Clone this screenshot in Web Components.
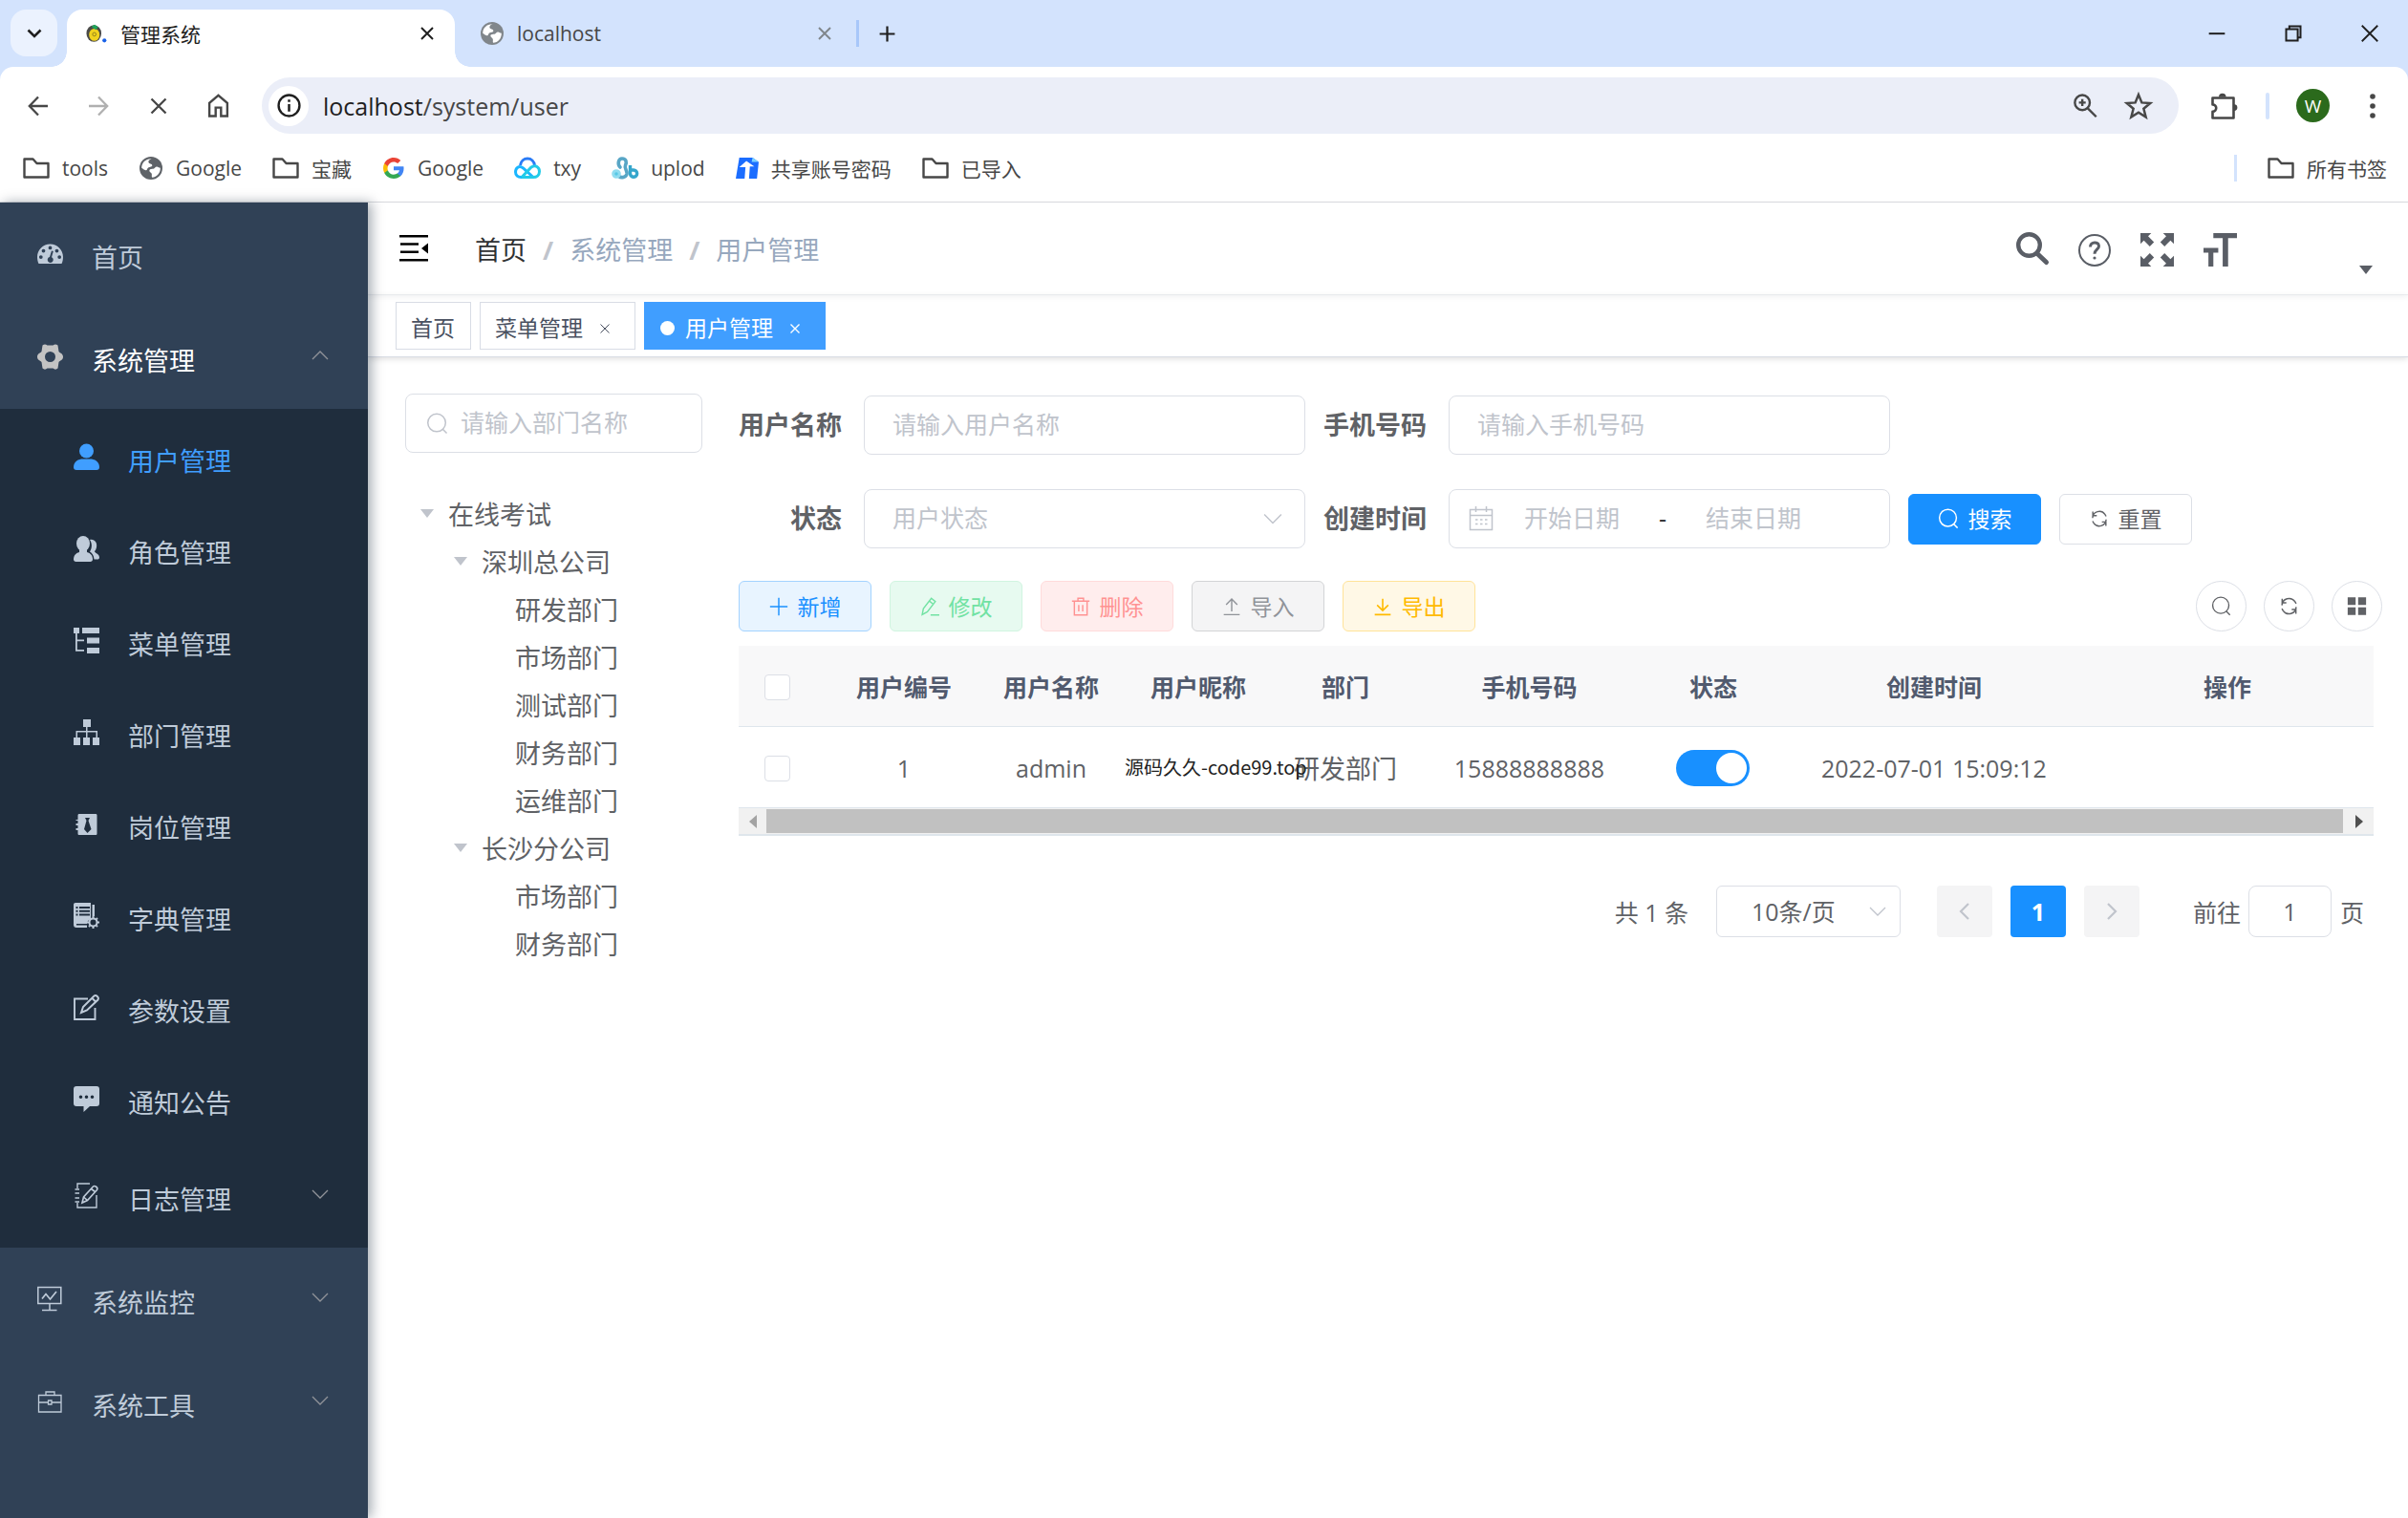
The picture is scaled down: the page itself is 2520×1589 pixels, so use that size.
<!DOCTYPE html>
<html lang="zh-CN">
<head>
<meta charset="utf-8">
<title>管理系统</title>
<style>
html,body{margin:0;height:100%}
body{font-family:"Open Sans","Noto Sans CJK SC",sans-serif;background:#fff;color:#606266;overflow:hidden}
</style>
</head>
<body>
<browser-window>
  <admin-app></admin-app>
</browser-window>
<script>
const S='fill="none" stroke="currentColor"';
const ICONS={
 down:['0 0 24 24',`<path ${S} stroke-width="2.6" d="M5.500 8.500l6.500 6.500 6.500-6.500"/>`],
 cross:['0 0 24 24',`<path ${S} stroke-width="2.6" d="M4 4l16 16M20 4L4 20"/>`],
 thin:['0 0 24 24',`<path ${S} stroke-width="2" d="M3 3l18 18M21 3L3 21"/>`],
 stop:['0 0 24 24',`<path ${S} stroke-width="2.800" d="M3 3l18 18M21 3L3 21"/>`],
 plus:['0 0 24 24',`<path ${S} stroke-width="2.800" d="M12 2v20M2 12h20"/>`],
 pine:['0 0 24 24','<ellipse cx="9" cy="12" rx="8.500" ry="9.500" fill="#4a4a48"/><ellipse cx="9.500" cy="13.500" rx="6" ry="7" fill="#f0d21e"/><path d="M6 4l5 4 3-3-4-3z" fill="#1fa35a"/><circle cx="9.500" cy="13" r="2" fill="none" stroke="#8b7d1b" stroke-width="1"/><circle cx="21" cy="20" r="2.300" fill="#1a62e8"/>'],
 globe:['0 0 24 24','<circle cx="12" cy="12" r="12" fill="currentColor"/><path fill="#fff" d="M12.500 2.200c-3 1-3.800 3-2.600 4.600 1.500 1.200 3 .4 3.400 2.200.3 1.900-2.700 1.500-4.200 2.600-1.700 1.300-.6 2.900-2.600 2.700-2-.2-2.600-1.800-4.300-2.500C2 6.500 6.500 2 12.500 2.200zM13.200 21.800c-1-1.300.2-2.600-.6-4.200-.8-1.500-2.700-1.700-2.200-3.600.6-1.500 2.400-1.100 4-1.300 1.800-.3 1.900-2.400 3.800-2.300 1.500.1 2 1.200 3.600 1.400.2 5.200-3.400 9.600-8.600 10z"/>'],
 min:['0 0 24 24','<path d="M2 11h20v2.400H2z"/>'],
 restore:['0 0 24 24',`<path ${S} stroke-width="2.400" d="M3 6.500h14.500V21H3zM7 6V3h14v14h-3"/>`],
 back:['0 0 24 24',`<path ${S} stroke-width="2.300" d="M22 12H3M12 2.500L2.800 12l9.200 9.500"/>`],
 fwd:['0 0 24 24',`<path ${S} stroke-width="2.300" d="M2 12h19M12 2.500l9.200 9.500-9.200 9.500"/>`],
 home:['0 0 24 24',`<path ${S} stroke-width="2.300" d="M3 22.500V9.500L12 1.800l9 7.700v13h-6.300V14h-5.400v8.500z"/>`],
 info:['0 0 24 24',`<circle cx="12" cy="12" r="10.500" ${S} stroke-width="2.300"/><path d="M10.800 10.500h2.400V18h-2.400zM10.800 6h2.400v2.500h-2.400z"/>`],
 zoomin:['0 0 24 24',`<circle cx="8.800" cy="9" r="7.500" ${S} stroke-width="2.300"/><path ${S} stroke-width="2.300" d="M14 14.500l8.800 8.800M8.800 5.600v6.800M5.400 9h6.800"/>`],
 star:['0 0 24 24',`<path ${S} stroke-width="2" d="M12 2.500l2.700 6.600 7.100.5-5.500 4.600 1.800 7L12 17.300l-6.100 3.900 1.800-7-5.500-4.600 7.100-.5z"/>`],
 puzzle:['0 0 28 28',`<path ${S} stroke-width="2.600" stroke-linejoin="round" d="M2.500 5.500h22v21h-22v-6.800c5 .2 5-7.400 0-7.300z"/><path d="M9 4.500a3.800 3.800 0 0 1 7.600 0zM25 12.200a3.300 3.300 0 0 1 0 6.800z"/>`],
 dots:['0 0 6 26','<circle cx="3" cy="3" r="2.800"/><circle cx="3" cy="13" r="2.800"/><circle cx="3" cy="23" r="2.800"/>'],
 folder:['0 0 28 22',`<path ${S} stroke-width="2.400" stroke-linejoin="round" d="M1.500 1.500h9l4 4.500h12v14.500h-25z"/>`],
 g:['0 0 24 24','<path fill="#4285f4" d="M23.500 12.300c0-.9-.1-1.600-.2-2.300H12v4.500h6.500c-.3 1.500-1.100 2.700-2.400 3.600v3h3.900c2.200-2.100 3.500-5.100 3.500-8.800z"/><path fill="#34a853" d="M12 24c3.200 0 5.900-1.100 7.900-2.900l-3.900-3c-1 .7-2.400 1.200-4 1.200-3.100 0-5.700-2.100-6.700-4.900h-4v3.100C3.300 21.400 7.300 24 12 24z"/><path fill="#fbbc05" d="M5.300 14.400c-.5-1.500-.5-3.200 0-4.700V6.600h-4c-1.700 3.400-1.700 7.400 0 10.800z"/><path fill="#ea4335" d="M12 4.800c1.800 0 3.300.6 4.600 1.800L20 3.200C17.900 1.200 15.200 0 12 0 7.300 0 3.300 2.700 1.300 6.600l4 3.100c1-2.800 3.600-4.900 6.700-4.900z"/>'],
 cloud:['0 0 28 24','<path fill="none" stroke="#2a7bf6" stroke-width="3" d="M6.500 9C7 4.500 10.500 2 14 2c4 0 7 3 7.500 7"/><path fill="none" stroke="#1ab6ff" stroke-width="3" d="M20 21.500L9.500 12C5 8.500 1.500 12 1.500 16c0 3.500 2.500 5.500 6 5.500H20"/><path fill="none" stroke="#22cbe8" stroke-width="3" d="M8 21.500l10-10.500C22.500 8 26.500 11 26.500 15.500c0 4-3 6-6.500 6H8"/>'],
 uplod:['0 0 28 24','<path fill="none" stroke="#58a6c6" stroke-width="3.600" stroke-linecap="round" d="M9 11C6 8 7 2 11 2c4.500 0 5 4 3.500 7-1.500 3.500 2 5 1.500 9-.8 4-6 4.500-8.500 2.500"/><circle cx="5" cy="18" r="3.300" fill="#57c8e5" stroke="#8fdcf0" stroke-width="3"/><path fill="none" stroke="#35a6cc" stroke-width="3.400" d="M19.500 9v9a3.600 3.600 0 1 0 3.600-4h-3"/>'],
 share:['0 0 26 24','<path fill="#1b6dff" d="M4 0h15l7 5-2 19H0z"/><path fill="#7dd3ff" d="M19 0l7 5h-8z"/><path fill="#fff" d="M4 11l8-7 9 6h-5l-1 14h-5l1-13z"/>'],
 dash:['0 0 27 27','<path fill-rule="evenodd" d="M1.500 24C.5 22 0 19.500 0 17 0 9.500 6 3.500 13.500 3.500S27 9.500 27 17c0 2.500-.5 5-1.500 7zM13.500 5.500a1.900 1.900 0 1 0 0 3.800 1.900 1.900 0 0 0 0-3.800zM6.500 8.700a1.900 1.900 0 1 0 0 3.800 1.900 1.900 0 0 0 0-3.800zM20.500 8.700a1.900 1.900 0 1 0 0 3.800 1.900 1.900 0 0 0 0-3.800zM3.800 15.200a1.900 1.900 0 1 0 0 3.800 1.900 1.900 0 0 0 0-3.800zM23.200 15.200a1.900 1.900 0 1 0 0 3.800 1.900 1.900 0 0 0 0-3.800zM15 10.500l-2 6.500a3 3 0 1 0 2 .2l1.800-6.200z"/>'],
 gear:['0 0 27 27','<path fill-rule="evenodd" d="M5.500 1.500C7 0 9 0 10.500 1.500h6C18 0 20 0 21.500 1.500L22.500 8c1 1.500 4.500 2 4.500 5.500S23.500 17.500 22.500 19l-1 6.500c-1.500 1.500-3.500 1.500-5 0h-6c-1.500 1.500-3.500 1.500-5 0L4.500 19C3.500 17.500 0 17 0 13.500S3.500 9.500 4.500 8zM13.500 8a5.500 5.500 0 1 0 0 11 5.500 5.500 0 0 0 0-11z"/>'],
 user:['0 0 27 27','<circle cx="13.500" cy="7" r="7.500"/><path d="M0 24c0-6 5-8.500 10-8.500h7c5 0 10 2.500 10 8.500 0 2-1 3-3 3H3c-2 0-3-1-3-3z"/>'],
 peoples:['0 0 27 27','<ellipse cx="10" cy="8" rx="7" ry="8"/><path d="M6 14v3c-4 1-6 4-6 7.500 0 1.500 1 2.500 2.500 2.500h15c1.500 0 2.500-1 2.500-2.500C20 21 18 18 14 17v-3z"/><path d="M17 4c5-1 8 3 7 8-.5 2-1 3-2 4 0 2 5 2.500 5 6.500 0 1.500-1 2-2 2h-3.500C21 20 19.500 18 17 16.500c2-3 3-8 0-12.500z"/>'],
 tree:['0 0 27 27','<path d="M0 0h6v6H0zM9 0h18v6H9zM14 10.500h13v6H14zM14 21h13v6H14zM2 6h1.800v6.500H11v1.800H3.800V23H11v1.800H2z"/>'],
 org:['0 0 27 27','<path d="M10 0h8v8h-8zM0 19h7v8H0zM10 19h7v8h-7zM20 19h7v8h-7zM13 8h1.500v4H25v7h-1.500v-5.500h-9V19H13v-5.500H4V19H2.500v-7H13z"/>'],
 post:['0 0 27 27','<path fill-rule="evenodd" d="M6 3h17c1 0 1.500.5 1.500 1.500v19c0 1-.5 1.500-1.500 1.500H6c-1 0-1.500-.5-1.500-1.500V20H2.500v-2h2v-3h-2v-2h2v-3h-2V9h2V4.500C4.500 3.500 5 3 6 3zM12 7l1.500 3-2.500 9 3.500 4 4-4-3-9L17 7z"/>'],
 dict:['0 0 27 27',`<path fill-rule="evenodd" d="M2 0h16v17c-3 1-4 3-4 5H3v1.500h11V26H3c-2 0-3-1-3-3V2C0 .8.8 0 2 0zM2.500 4v2h2V4zM6 4v2h11V4zM2.500 7.800v2h2v-2zM6 7.800v2h11v-2zM2.500 11.600v2h2v-2zM6 11.600v2h11v-2zM19.500 2h2.500v12h-2.500z"/><circle cx="20.500" cy="20.500" r="4" ${S} stroke-width="2"/><path ${S} stroke-width="2" d="M20.500 14v2M20.500 25v2M14 20.500h2M25 20.500h2M16 16l1.200 1.200M23.800 23.800L25 25M25 16l-1.200 1.200M17.200 23.800L16 25"/>`],
 edit:['0 0 27 27',`<path ${S} stroke-width="1.900" d="M15 4.500H1v21.500h21.500V14"/><path ${S} stroke-width="2" d="M8 19l2-6L21.500 1.500c2-1.500 5.500 1.500 4 4L14 16.500zM19.500 4l3.500 3.500"/>`],
 msg:['0 0 27 27','<path fill-rule="evenodd" d="M3 0h21c2 0 3 1 3 3v15c0 2-1 3-3 3h-7l-6.500 6v-6H3c-2 0-3-1-3-3V3c0-2 1-3 3-3zM7.500 9.500a1.800 1.800 0 1 0 0 3.600 1.800 1.800 0 0 0 0-3.600zM13.500 9.500a1.800 1.800 0 1 0 0 3.600 1.800 1.800 0 0 0 0-3.600zM19.500 9.500a1.800 1.800 0 1 0 0 3.600 1.800 1.800 0 0 0 0-3.600z"/>'],
 log:['0 0 27 27',`<path ${S} stroke-width="1.400" d="M17 1H4v5M4 21v5h20V13M1.500 7H6M1.500 11H6M1.500 16H6M1.500 20H6"/><path ${S} stroke-width="1.600" d="M9 21l1.500-6L20.500 4c1.500-1.500 5.500 1 4 3.500L14.500 18.500zM18.500 6.500l4 3M10.500 15l4 3.500"/>`],
 monitor:['0 0 27 27',`<path ${S} stroke-width="1.500" d="M.8 1.500h24v17H.8zM13 18.500V25M5 25.500h15.500"/><path ${S} stroke-width="1.700" d="M5 13.500l4-5 4.500 5.500L20 6"/>`],
 tool:['0 0 27 27',`<path ${S} stroke-width="1.300" d="M1.500 6.500h23.500v17.500H1.500zM9 6.500V3h9v3.500M1.500 14H11.500M15 14h10M11.500 12H15v4h-3.500z"/>`],
 chev:['0 0 18 18',`<path ${S} stroke-width="1.300" d="M1 5l8 8 8-8"/>`],
 chevup:['0 0 18 18',`<path ${S} stroke-width="1.300" d="M1 13l8-8 8 8"/>`],
 left:['0 0 18 18',`<path ${S} stroke-width="2.200" d="M13 1L5 9l8 8"/>`],
 right:['0 0 18 18',`<path ${S} stroke-width="2.200" d="M5 1l8 8-8 8"/>`],
 burger:['0 0 30 28','<path d="M0 0h30v2.600H0zM1 8.200h19v2.500H1zM1 16.500h19V19H1zM0 25h30v2.600H0zM30 8.500v11L23 14z"/>'],
 bigsearch:['0 0 34 34',`<circle cx="13.500" cy="13.500" r="11.300" ${S} stroke-width="4.400"/><path ${S} stroke-width="5" stroke-linecap="round" d="M22 22.500l9.500 9"/>`],
 help:['0 0 34 34',`<circle cx="17" cy="17" r="16" ${S} stroke-width="2"/><path ${S} stroke-width="3" d="M12.500 13.500c0-6 9-6 9-.8 0 3.300-4.500 3.800-4.500 8"/><circle cx="17" cy="25" r="1.600"/>`],
 full:['0 0 34 34','<path d="M0 0h11L7.800 3.200l6 6-4.300 4.300-6-6L0 11zM34 0v11l-3.500-3.500-6 6-4.300-4.300 6-6L23 0zM0 34V23l3.500 3.500 6-6 4.300 4.300-6 6L11 34zM34 34H23l3.200-3.200-6-6 4.300-4.300 6 6L34 23z"/>'],
 size:['0 0 34 34','<path d="M10 0h24v5H25v29h-5.500V5H10zM0 15h15v5h-5v14H5V20H0z"/>'],
 caret:['0 0 14 9','<path d="M0 0h14L7 9z"/>'],
 search:['0 0 24 24',`<circle cx="11.500" cy="11" r="9.700" ${S} stroke-width="1.600"/><path ${S} stroke-width="1.600" d="M18 18l4.500 4.500"/>`],
 cal:['0 0 26 26',`<path ${S} stroke-width="1.500" d="M1.500 3.500h23v21h-23zM1.500 9.500h23M7.500 0v6M18.500 0v6"/><path ${S} stroke-width="1.500" stroke-dasharray="2.500 2.500" d="M7 14h12.500M7 18.500h12.500"/>`],
 refresh:['0 0 24 24',`<path ${S} stroke-width="1.700" d="M3.500 11A8.500 8.500 0 0 1 19 6.500l1.500 2.500M3.800 3v5h5M20.500 13A8.500 8.500 0 0 1 5 17.500L3.500 15M20.200 21v-5h-5"/>`],
 add:['0 0 24 24',`<path ${S} stroke-width="1.700" d="M12 1v22M1 12h22"/>`],
 pen:['0 0 24 24',`<path ${S} stroke-width="1.700" d="M2.500 22L4 14.500 14 1.500l5 4L9 18.500zM11.500 5l5 4M13 22.500h11"/>`],
 trash:['0 0 24 24',`<path ${S} stroke-width="1.700" d="M1 5h22M4 5v17.500h16V5M8.500 5V1.500h7V5M9.500 10v8M14.500 10v8"/>`],
 up:['0 0 24 24',`<path ${S} stroke-width="1.700" d="M12 18V3M5 9.500l7-7 7 7M2 22h20"/>`],
 dl:['0 0 24 24',`<path ${S} stroke-width="1.900" d="M12 2v14M5 10l7 7 7-7M2 22h20"/>`],
 grid:['0 0 24 24','<path d="M1 1.500h9.500v9H1zM13.500 1.500H23v9h-9.500zM1 13.500h9.500v9H1zM13.500 13.500H23v9h-9.500z"/>'],
 sl:['0 0 8 14','<path d="M8 0v14L0 7z"/>'],
 sr:['0 0 8 14','<path d="M0 0v14l8-7z"/>']
};
const RESET=`*{box-sizing:border-box}button,input,select{font:inherit;color:inherit;margin:0;padding:0;border:0;background:none;border-radius:0;outline:0}
button{display:inline-flex;align-items:center;justify-content:center;white-space:nowrap}a{color:inherit;text-decoration:none}
input,select{min-width:0;appearance:none}input::placeholder{color:#c0c4cc;opacity:1}`;
function define(name,html){
  customElements.define(name,class extends HTMLElement{
    connectedCallback(){
      if(this.shadowRoot)return;
      const t=document.createElement('template');
      t.innerHTML=`<style>${RESET}</style>`+(typeof html==='function'?html(this):html);
      this.attachShadow({mode:'open'}).append(t.content.cloneNode(true));
    }
  });
}
const ic=(n,w,h)=>`<ui-icon name="${n}" w="${w}" h="${h||w}"></ui-icon>`;

define('ui-icon',e=>{
  const [vb,body]=ICONS[e.getAttribute('name')],w=e.getAttribute('w'),h=e.getAttribute('h');
  return `<style>:host{display:inline-flex;flex:none}svg{display:block;overflow:visible}</style><svg width="${w}" height="${h}" viewBox="${vb}" fill="currentColor" aria-hidden="true">${body}</svg>`;
});

/* ---- browser frame ---- */
define('tab-strip',`<style>
:host{display:flex;height:70px;background:#d3e3fd;padding:10px 0 0 11px;color:#1f1f1f;font-size:21px}
.list{width:49px;height:49px;border-radius:16px;background:#ebf2fe;margin-right:10px}
.tab{display:flex;align-items:center;height:60px;width:406px;padding:0 18px 10px 20px}
.tab span{flex:1;margin-left:14px}
.on{background:#fff;border-radius:16px 16px 0 0;padding-right:20px;position:relative}
.on::before,.on::after{content:"";position:absolute;bottom:0;width:16px;height:16px;background:radial-gradient(circle at 0 0,#0000 15.5px,#fff 16px)}
.on::before{left:-16px}.on::after{right:-16px;background:radial-gradient(circle at 100% 0,#0000 15.5px,#fff 16px)}
.off{color:#474747;padding:0 10px 10px 27px}
.off ui-icon:first-child{color:#80868b}
.sep{width:3px;height:28px;background:#a8c7fa;margin:11px 20px 0 14px}
.new{height:50px}
.win{margin-left:auto;display:flex}.win button{width:80px;height:50px}
</style>
<button class="list" aria-label="搜索标签页">${ic('down',24)}</button>
<div class="tab on">${ic('pine',22)}<span>管理系统</span><button aria-label="关闭">${ic('cross',18)}</button></div>
<div class="tab off">${ic('globe',24)}<span>localhost</span><button aria-label="关闭">${ic('cross',18)}</button></div>
<div class="sep"></div><button class="new" aria-label="新标签页">${ic('plus',19)}</button>
<div class="win"><button aria-label="最小化">${ic('min',20)}</button><button aria-label="还原">${ic('restore',20)}</button><button aria-label="关闭窗口">${ic('thin',22)}</button></div>`);

define('address-bar',`<style>
:host{display:flex;align-items:center;padding:11px 12px 0 8px;color:#474747}
.nav{width:63px;height:59px}.dim{color:#b0b0b0}
.pill{flex:1;display:flex;align-items:center;height:59px;margin-left:14px;border-radius:30px;background:#ebeef8;padding:0 14px 0 7px;font-size:25px}
.site{width:42px;height:42px;border-radius:50%;background:#fff;color:#1f1f1f}
.url{flex:1;margin-left:15px}.url b{font-weight:400;color:#1f1f1f}
.pill .act{width:56px}
.ext{margin:0 30px 0 33px}.sep{width:4px;height:28px;border-radius:2px;background:#d3e3fd}
.me{width:35px;height:35px;border-radius:50%;background:#2b6a1c;color:#fff;font-size:19px;margin:0 20px 0 28px}
.more{width:50px}
</style>
<button class="nav" aria-label="后退">${ic('back',24)}</button><button class="nav dim" aria-label="前进">${ic('fwd',24)}</button><button class="nav" aria-label="停止">${ic('stop',20)}</button><button class="nav" aria-label="主页">${ic('home',25)}</button>
<div class="pill"><button class="site" aria-label="网站信息">${ic('info',25)}</button><span class="url"><b>localhost</b>/system/user</span><button class="act" aria-label="缩放">${ic('zoomin',25)}</button><button class="act" aria-label="收藏">${ic('star',30)}</button></div>
<button class="ext" aria-label="扩展程序">${ic('puzzle',28)}</button><div class="sep"></div><button class="me">W</button><button class="more" aria-label="菜单">${ic('dots',6,26)}</button>`);

define('book-mark',e=>`<style>:host{display:block;color:#474747}:host([icon=globe]) ui-icon{color:#5f6368}a{display:flex;align-items:center;gap:13px}</style><a href="#">${ic(e.getAttribute('icon'),e.getAttribute('w'),e.getAttribute('h'))}<slot></slot></a>`);
define('bookmark-bar',`<style>
:host{display:flex;align-items:center;height:72px;padding:0 22px 0 24px;gap:32px;border-bottom:1px solid #dadce0;font-size:21px}
.sep{width:3px;height:28px;background:#d3e3fd;margin-left:auto}
</style>
<book-mark icon="folder" w="28" h="22">tools</book-mark><book-mark icon="globe" w="26" h="24">Google</book-mark><book-mark icon="folder" w="28" h="22">宝藏</book-mark><book-mark icon="g" w="24" h="22">Google</book-mark><book-mark icon="cloud" w="28" h="24">txy</book-mark><book-mark icon="uplod" w="28" h="24">uplod</book-mark><book-mark icon="share" w="24" h="24">共享账号密码</book-mark><book-mark icon="folder" w="28" h="22">已导入</book-mark>
<div class="sep"></div><book-mark icon="folder" w="28" h="22">所有书签</book-mark>`);

define('browser-window',`<style>
:host{display:flex;flex-direction:column;height:100vh;background:#d3e3fd}
.body{flex:1;display:flex;flex-direction:column;background:#fff;border-radius:14px 14px 0 0;min-height:0}
.page{flex:1;display:flex;min-height:0}
::slotted(*){flex:1}
</style><tab-strip></tab-strip><div class="body"><address-bar></address-bar><bookmark-bar></bookmark-bar><div class="page"><slot></slot></div></div>`);

/* ---- sidebar ---- */
define('side-item',e=>`<style>
:host{display:block;color:#bfcbd9;font-size:27px}
:host([active]){color:#409eff}:host([open]){color:#fff}
a{display:flex;align-items:center;height:108px;padding:0 41px 0 39px}
:host([level="2"]) a{padding-left:77px}
:host([leaf]) a{height:96px}
:host([open]) .i{color:#c3c3c3}
.i{display:flex;margin-right:30px;padding-bottom:1px}
:host([leaf]) .i{padding-bottom:0}
.t{flex:1;line-height:40px;padding-top:8px}
:host([leaf]) .t{padding-top:10px}
.c{display:flex;color:#909399;padding-bottom:5px}
</style><a href="#"><span class="i">${ic(e.getAttribute('icon'),27)}</span><span class="t"><slot></slot></span>${e.hasAttribute('leaf')||e.hasAttribute('plain')?'':`<span class="c">${ic(e.hasAttribute('open')?'chevup':'chev',18)}</span>`}</a>`);
define('side-bar',`<style>
:host{display:block;width:385px;flex:none;background:#304156;box-shadow:4px 0 12px rgba(0,21,41,.35);position:relative;z-index:2}
.sub{background:#1f2d3d;padding-top:2px}
</style><nav>
<side-item icon="dash" plain>首页</side-item>
<side-item icon="gear" open>系统管理</side-item>
<div class="sub">
<side-item icon="user" level="2" leaf active>用户管理</side-item>
<side-item icon="peoples" level="2" leaf>角色管理</side-item>
<side-item icon="tree" level="2" leaf>菜单管理</side-item>
<side-item icon="org" level="2" leaf>部门管理</side-item>
<side-item icon="post" level="2" leaf>岗位管理</side-item>
<side-item icon="dict" level="2" leaf>字典管理</side-item>
<side-item icon="edit" level="2" leaf>参数设置</side-item>
<side-item icon="msg" level="2" leaf>通知公告</side-item>
<side-item icon="log" level="2">日志管理</side-item>
</div>
<side-item icon="monitor">系统监控</side-item>
<side-item icon="tool">系统工具</side-item>
</nav>`);

/* ---- header ---- */
define('nav-bar',`<style>
:host{display:flex;align-items:center;height:97px;padding:0 37px 0 33px;border-bottom:1px solid #eef0f3;box-shadow:0 2px 6px rgba(0,21,41,.06);font-size:27px}
.burger{color:#000}
.crumb{flex:1;display:flex;gap:17px;margin-left:49px;padding-top:4px;line-height:40px;color:#97a8be}
.crumb a{color:#303133}.crumb i{font-style:normal;font-weight:700;color:#c0c4cc}
.tools{display:flex;gap:31px;padding-top:3px;color:#5a5e66}
.tools button:first-child{padding-bottom:4px}
.user{color:#5a5e66;align-self:flex-end;margin:0 0 21px 128px}
</style>
<button class="burger" aria-label="折叠菜单">${ic('burger',30,28)}</button>
<nav class="crumb"><a href="#">首页</a><i>/</i><span>系统管理</span><i>/</i><span>用户管理</span></nav>
<div class="tools"><button aria-label="搜索">${ic('bigsearch',34)}</button><button aria-label="文档">${ic('help',34)}</button><button aria-label="全屏">${ic('full',35)}</button><button aria-label="字号">${ic('size',35)}</button></div>
<button class="user" aria-label="用户菜单">${ic('caret',14,9)}</button>`);

define('tag-item',e=>`<style>
:host{display:flex;align-items:center;height:50px;border:1px solid #d8dce5;padding:1px 16px 0 15px;color:#495060;background:#fff}
:host([active]){background:#409eff;border-color:#409eff;color:#fff;padding-left:16px}
i{width:15px;height:15px;border-radius:50%;background:#fff;margin:3px 11px 0 0}
button{width:30px;margin:5px 0 0 8px}
</style>${e.hasAttribute('active')?'<i></i>':''}<a href="#"><slot></slot></a>${e.hasAttribute('fixed')?'':`<button aria-label="关闭标签">${ic(e.hasAttribute('active')?'stop':'thin',12)}</button>`}`);
define('tags-view',`<style>
:host{display:flex;gap:9px;height:65px;padding:7px 29px;font-size:23px;border-bottom:1px solid #d8dce5;box-shadow:0 2px 6px rgba(0,0,0,.12)}
</style><tag-item fixed>首页</tag-item><tag-item>菜单管理</tag-item><tag-item active>用户管理</tag-item>`);

/* ---- department tree ---- */
define('tree-node',e=>`<style>
:host{display:block;font-size:27px}
div{display:flex;align-items:center;height:50px}
:host([depth="1"]) div{padding-left:35px}:host([depth="2"]) div{padding-left:70px}
i{width:14px;margin-right:15px;display:flex;color:#c0c4cc}
</style><div><i>${e.hasAttribute('open')?ic('caret',14,9):''}</i><slot></slot></div>`);
define('dept-tree',`<style>
:host{display:block;width:311px;flex:none}
.s{display:flex;align-items:center;height:62px;border:1px solid #dcdfe6;border-radius:8px;padding:0 18px 0 21px;font-size:25px;color:#c0c4cc}
.s input{flex:1;margin-left:13px;padding-bottom:2px}
.t{padding:38px 0 0 16px}
</style><label class="s">${ic('search',23)}<input placeholder="请输入部门名称" aria-label="部门名称"></label>
<div class="t"><tree-node open>在线考试</tree-node><tree-node depth="1" open>深圳总公司</tree-node><tree-node depth="2">研发部门</tree-node><tree-node depth="2">市场部门</tree-node><tree-node depth="2">测试部门</tree-node><tree-node depth="2">财务部门</tree-node><tree-node depth="2">运维部门</tree-node><tree-node depth="1" open>长沙分公司</tree-node><tree-node depth="2">市场部门</tree-node><tree-node depth="2">财务部门</tree-node></div>`);

/* ---- search form ---- */
define('form-field',e=>{
  const k=e.getAttribute('kind'),p=e.getAttribute('hint');
  const body=k==='select'?`<select id="f"><option>${p}</option></select>${ic('chev',20)}`
    :k==='range'?`${ic('cal',26)}<input id="f" class="d" placeholder="开始日期"><span>-</span><input class="d" placeholder="结束日期" aria-label="结束日期">`
    :`<input id="f" placeholder="${p}">`;
  return `<style>
:host{display:flex;align-items:center}
label{width:108px;text-align:right;font-size:27px;font-weight:700;margin-right:23px;padding-bottom:4px;white-space:nowrap}
.b{display:flex;align-items:center;width:462px;height:62px;border:1px solid #dcdfe6;border-radius:8px;padding:0 ${k==='select'?23:20}px 0 ${k==='range'?20:29}px;font-size:25px;color:#c0c4cc}
input,select{flex:1;padding-bottom:3px}
.d{flex:none;width:164px;text-align:center}span{width:26px;text-align:center;color:#303133;padding-bottom:3px}
</style><label for="f">${e.getAttribute('label')}</label><div class="b">${body}</div>`;
});
define('ui-button',e=>`<style>
:host{display:block;font-size:23px;color:#606266;--b:#dcdfe6;--g:#fff}
:host([kind=solid]){color:#fff;--b:#1890ff;--g:#1890ff}
:host([kind=add]){color:#1890ff;--b:#a3d3ff;--g:#e8f4ff}
:host([kind=edit]){color:#71e2a3;--b:#d0f5e0;--g:#e7faf0}
:host([kind=del]){color:#ff9292;--b:#ffdbdb;--g:#ffeded}
:host([kind=imp]){color:#909399;--b:#d3d4d6;--g:#f4f4f5}
:host([kind=exp]){color:#ffba00;--b:#ffe399;--g:#fff8e6}
button{width:139px;height:53px;gap:10px;border:1px solid var(--b);background:var(--g);border-radius:6px}
span{padding-bottom:2px}
:host([round]) button{width:53px;border-radius:50%}
</style><button ${e.hasAttribute('disabled')?'disabled':''} ${e.hasAttribute('round')?`aria-label="${e.getAttribute('label')}"`:''}>${ic(e.getAttribute('icon'),e.hasAttribute('round')?21:e.getAttribute('icon')==='search'?22:20)}${e.hasAttribute('round')?'':'<span><slot></slot></span>'}</button>`);
define('search-form',`<style>
:host{display:block}form{display:flex;flex-wrap:wrap;align-items:center;gap:36px 19px}
.x{display:flex;gap:19px}
</style><form><form-field label="用户名称" hint="请输入用户名称"></form-field><form-field label="手机号码" hint="请输入手机号码"></form-field><form-field label="状态" kind="select" hint="用户状态"></form-field><form-field label="创建时间" kind="range"></form-field><div class="x"><ui-button kind="solid" icon="search">搜索</ui-button><ui-button icon="refresh">重置</ui-button></div></form>`);
define('table-tools',`<style>
:host{display:flex;gap:19px;margin:34px -9px 15px 0}
.r{display:flex;gap:18px;margin-left:auto}
</style><ui-button kind="add" icon="add">新增</ui-button><ui-button kind="edit" icon="pen" disabled>修改</ui-button><ui-button kind="del" icon="trash" disabled>删除</ui-button><ui-button kind="imp" icon="up">导入</ui-button><ui-button kind="exp" icon="dl">导出</ui-button>
<div class="r"><ui-button round icon="search" label="隐藏搜索"></ui-button><ui-button round icon="refresh" label="刷新"></ui-button><ui-button round icon="grid" label="显隐列"></ui-button></div>`);

/* ---- table ---- */
define('user-table',`<style>
:host{display:block}
.w{overflow:hidden}
table{width:100%;border-collapse:separate;border-spacing:0;table-layout:fixed;font-size:25px}
th{height:85px;background:#f8f8f9;color:#515a6e;font-weight:700;padding:0;border-bottom:1px solid #dfe6ec}
td{height:84px;padding:1px 0 0;text-align:center;white-space:nowrap}
th:first-child,td:first-child{text-align:left;padding:2px 0 0 27px}
td.nick{font-size:20px;font-family:"Noto Sans CJK SC",sans-serif;color:#222;position:relative;z-index:1;text-align:left;padding-bottom:2px}
.dept{font-size:27px}
input[type=checkbox]{display:block;width:27px;height:27px;border:1px solid #dcdfe6;border-radius:4px;background:#fff}
input.sw{width:77px;height:38px;border:0;border-radius:19px;background:#1890ff;display:inline-flex;align-items:center;justify-content:flex-end;padding-right:3px;vertical-align:middle}
input.sw::before{content:"";width:32px;height:32px;border-radius:50%;background:#fff}
.bar{display:flex;align-items:center;height:30px;background:#f1f1f1;border-top:1px solid #dfe6ec;border-bottom:2px solid #dfe6ec;padding:0 11px;color:#a3a3a3}
.bar i{flex:1;height:25px;background:#c1c1c1;margin:0 13px 0 10px}
.bar b{display:flex;color:#505050}
</style><div class="w"><table>
<colgroup><col style="width:96px"><col style="width:9%"><col style="width:9%"><col style="width:9%"><col style="width:9%"><col style="width:13.500%"><col style="width:9%"><col style="width:18%"><col></colgroup>
<thead><tr><th><input type="checkbox" aria-label="全选"></th><th>用户编号</th><th>用户名称</th><th>用户昵称</th><th>部门</th><th>手机号码</th><th>状态</th><th>创建时间</th><th>操作</th></tr></thead>
<tbody><tr><td><input type="checkbox" aria-label="选择 admin"></td><td>1</td><td>admin</td><td class="nick">源码久久-code99.top</td><td class="dept">研发部门</td><td>15888888888</td><td><input class="sw" type="checkbox" role="switch" checked aria-label="状态"></td><td>2022-07-01 15:09:12</td><td></td></tr></tbody>
</table></div><div class="bar">${ic('sl',8,14)}<i></i><b>${ic('sr',8,14)}</b></div>`);

define('page-nav',`<style>
:host{display:flex;align-items:center;justify-content:flex-end;margin-top:52px;padding-right:10px;font-size:25px}
.sel{display:flex;align-items:center;width:193px;height:54px;border:1px solid #dcdfe6;border-radius:6px;margin:0 38px 0 29px;padding:0 14px 0 36px}
.sel select{flex:1}.sel ui-icon{color:#c0c4cc}
.p{display:flex;gap:19px}.p button{width:58px;height:54px;border-radius:4px;background:#f4f4f5;color:#c0c4cc}
.p .on{background:#1890ff;color:#fff;font-weight:700}
.go{display:flex;align-items:center;margin-left:56px}
.go input{width:87px;height:54px;border:1px solid #dcdfe6;border-radius:8px;text-align:center;margin:0 9px 0 8px}
</style><span>共 1 条</span>
<div class="sel"><select aria-label="每页条数"><option>10条/页</option></select>${ic('chev',18)}</div>
<div class="p"><button disabled aria-label="上一页">${ic('left',18)}</button><button class="on">1</button><button disabled aria-label="下一页">${ic('right',18)}</button></div>
<label class="go">前往<input value="1">页</label>`);

define('admin-app',`<style>
:host{display:flex;min-height:0}
main{flex:1;min-width:0;display:flex;flex-direction:column;background:#fff}
.c{display:flex;gap:38px;padding:38px 36px 0 39px}
.r{flex:1;min-width:0;padding-top:2px}
</style><side-bar></side-bar><main><nav-bar></nav-bar><tags-view></tags-view>
<div class="c"><dept-tree></dept-tree><div class="r"><search-form></search-form><table-tools></table-tools><user-table></user-table><page-nav></page-nav></div></div></main>`);
</script>
</body>
</html>
